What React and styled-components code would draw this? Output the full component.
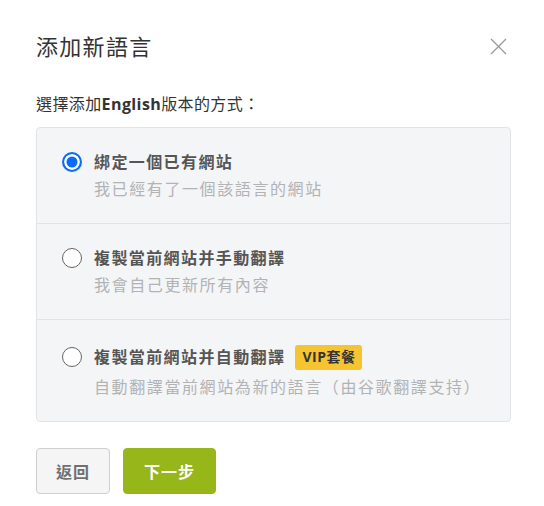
import React, { useState } from "react";
import styled, { createGlobalStyle } from "styled-components";

const GlobalStyle = createGlobalStyle`
  * { box-sizing: border-box; }
  body {
    margin: 0;
    background: #fff;
    font-family: "Open Sans", "Noto Sans CJK TC", sans-serif;
  }
`;

const DialogStyle = styled.div`
  width: 544px;
  padding: 31px 33px 0 36px;
`;
const HeaderStyle = styled.div`
  display: flex;
  justify-content: space-between;
  align-items: center;
  height: 30px;
`;
const TitleStyle = styled.h2`
  margin: 0;
  font-size: 22px;
  line-height: 30px;
  font-weight: 400;
  letter-spacing: 1.3px;
  color: #333;
`;
const CloseButtonStyle = styled.button`
  display: flex;
  padding: 0;
  margin-right: 4px;
  border: 0;
  background: none;
  cursor: pointer;
`;
const LeadStyle = styled.p`
  margin: 31px 0 11px;
  font-size: 16px;
  line-height: 24px;
  letter-spacing: 0.4px;
  color: #333;

  b {
    font-weight: 700;
  }
`;
const OptionListStyle = styled.ul`
  margin: 0;
  padding: 0;
  list-style: none;
  background: #f4f5f7;
  border: 1px solid #e1e3e7;
  border-radius: 4px;
`;
const OptionStyle = styled.li`
  display: flex;
  align-items: flex-start;
  padding: 22px 20px 22px 25px;
  border-top: ${(p) => (p.$first ? "0" : "1px solid #e1e3e7")};
  cursor: pointer;
`;
const RadioStyle = styled.span`
  flex: none;
  width: 20px;
  height: 20px;
  margin-top: ${(p) => p.$offset}px;
  margin-right: 12px;
  border-radius: 50%;
  border: ${(p) => (p.$checked ? "2px solid #0a6cff" : "1.5px solid #666")};
  background: ${(p) => (p.$checked ? "#0a6cff" : "#fff")};
  box-shadow: ${(p) => (p.$checked ? "inset 0 0 0 2.5px #fff" : "none")};
`;
const OptionTextStyle = styled.div`
  display: flex;
  flex-direction: column;
  gap: 3px;
`;
const OptionTitleStyle = styled.div`
  display: flex;
  align-items: center;
  min-height: ${(p) => (p.$tall ? 30 : 24)}px;
  font-size: 16px;
  line-height: 24px;
  font-weight: 700;
  letter-spacing: 1.4px;
  color: #555;
`;
const OptionDescStyle = styled.div`
  font-size: 16px;
  line-height: 24px;
  letter-spacing: 1.6px;
  color: #b2b3b5;
`;
const BadgeStyle = styled.span`
  display: inline-flex;
  align-items: center;
  height: 25px;
  margin-left: 10px;
  padding: 0 7px;
  border-radius: 3px;
  background: #f5c431;
  color: #333;
  font-size: 14px;
  font-weight: 700;
  letter-spacing: 0.5px;
`;
const FooterStyle = styled.div`
  display: flex;
  gap: 13px;
  margin-top: 26px;
`;
const ButtonStyle = styled.button`
  height: 46px;
  padding: 0 ${(p) => (p.$primary ? 20 : 19)}px;
  border-radius: 4px;
  border: 1px solid ${(p) => (p.$primary ? "#96b61a" : "#cfcfcf")};
  background: ${(p) => (p.$primary ? "#96b61a" : "#f5f5f5")};
  color: ${(p) => (p.$primary ? "#fff" : "#707070")};
  font-family: inherit;
  font-size: 16px;
  font-weight: 700;
  letter-spacing: 1px;
  cursor: pointer;
`;

const options = [
  { title: "綁定一個已有網站", desc: "我已經有了一個該語言的網站" },
  { title: "複製當前網站并手動翻譯", desc: "我會自己更新所有內容" },
  {
    title: "複製當前網站并自動翻譯",
    desc: "自動翻譯當前網站為新的語言（由谷歌翻譯支持）",
    badge: "VIP套餐",
  },
];

const App = () => {
  const [selected, setSelected] = useState(0);

  return (
    <DialogStyle>
      <GlobalStyle />
      <HeaderStyle>
        <TitleStyle>添加新語言</TitleStyle>
        <CloseButtonStyle type="button" aria-label="close">
          <svg width="17" height="17" viewBox="0 0 17 17">
            <path d="M1 1 L16 16 M16 1 L1 16" stroke="#9a9a9a" strokeWidth="1.3" fill="none" />
          </svg>
        </CloseButtonStyle>
      </HeaderStyle>

      <LeadStyle>
        選擇添加<b>English</b>版本的方式：
      </LeadStyle>

      <OptionListStyle>
        {options.map((o, i) => (
          <OptionStyle key={o.title} $first={i === 0} onClick={() => setSelected(i)}>
            <RadioStyle $checked={selected === i} $offset={o.badge ? 5 : 2} />
            <OptionTextStyle>
              <OptionTitleStyle $tall={!!o.badge}>
                {o.title}
                {o.badge && <BadgeStyle>{o.badge}</BadgeStyle>}
              </OptionTitleStyle>
              <OptionDescStyle>{o.desc}</OptionDescStyle>
            </OptionTextStyle>
          </OptionStyle>
        ))}
      </OptionListStyle>

      <FooterStyle>
        <ButtonStyle type="button">返回</ButtonStyle>
        <ButtonStyle type="button" $primary>
          下一步
        </ButtonStyle>
      </FooterStyle>
    </DialogStyle>
  );
};

export default App;
